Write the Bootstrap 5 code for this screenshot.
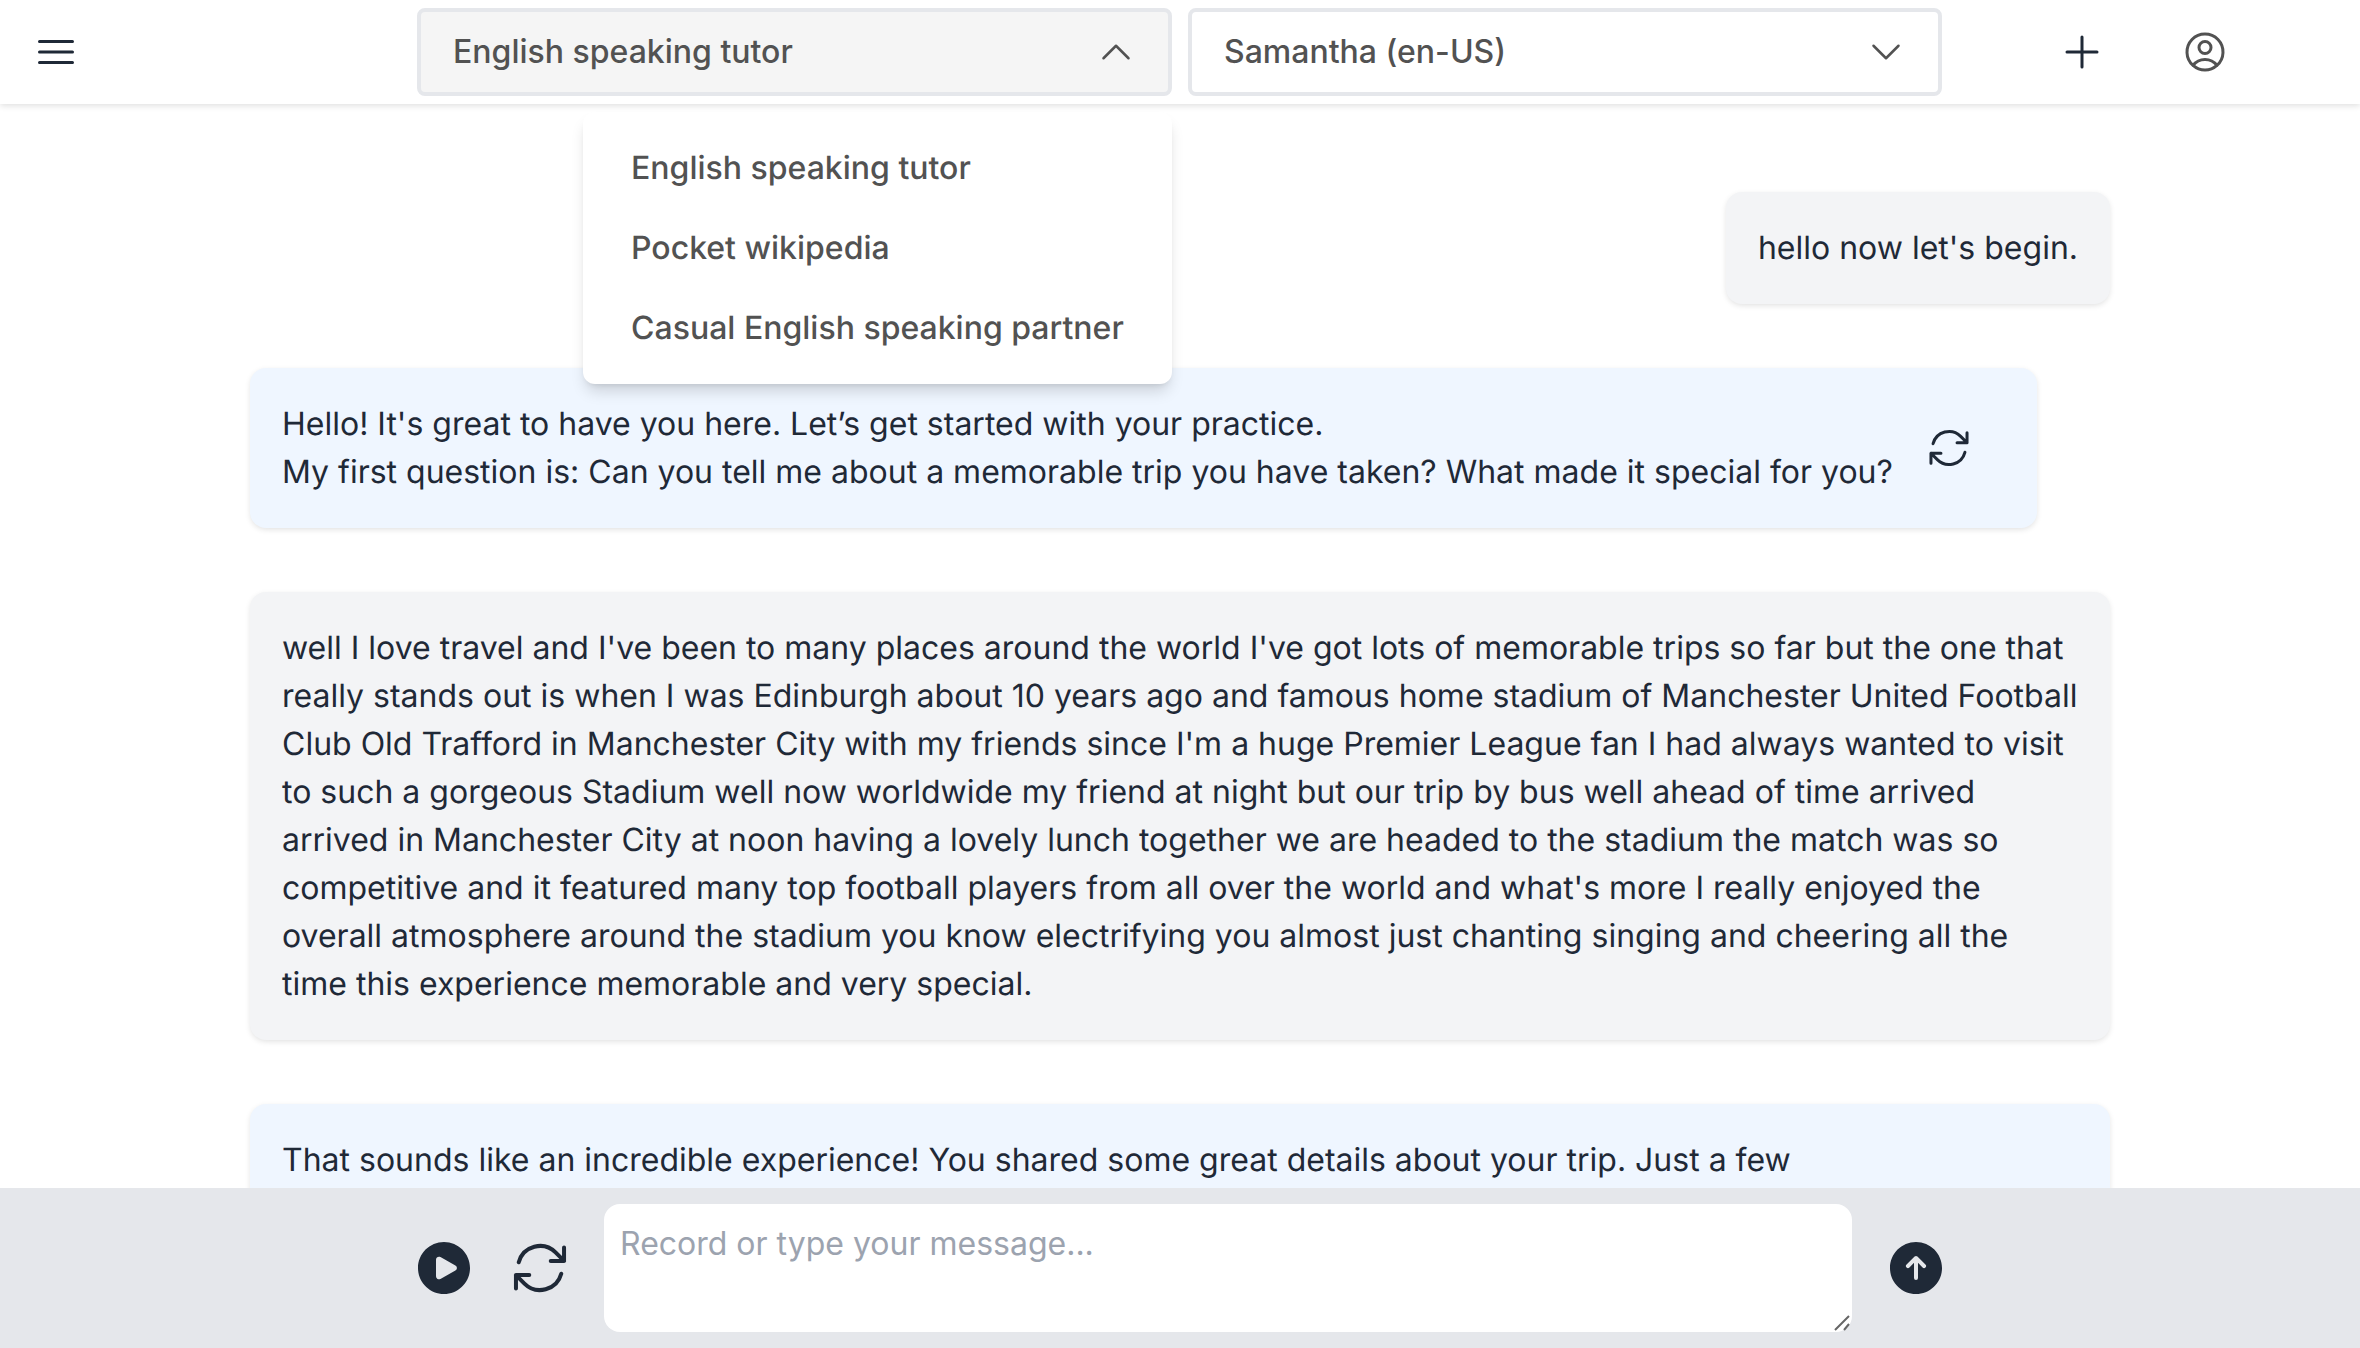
<!DOCTYPE html>
<html lang="en">
<head>
<meta charset="utf-8">
<title>English speaking tutor</title>
<link href="https://cdn.jsdelivr.net/npm/bootstrap@5.3.0/dist/css/bootstrap.min.css" rel="stylesheet">
<style>
html,body{height:100%}
body{font-family:Inter,"Liberation Sans",sans-serif;font-size:32px;line-height:48px;color:#1f2937;background:#fff;overflow:hidden;height:1348px;text-rendering:geometricPrecision}
.app-top{height:104px;flex:none;background:#fff;box-shadow:0 2px 6px rgba(0,0,0,.12);position:relative;z-index:5}
.top-left{width:417px;padding-left:32px;flex:none}
.top-right{width:418px;padding-left:116px;gap:75px;flex:none}
.top-mid{gap:16px;flex:none}
.ico{flex:none;display:block;fill:none;stroke:currentColor;stroke-width:1.5;stroke-linecap:round;stroke-linejoin:round}
.ico48{width:48px;height:48px}
.ico64{width:64px;height:64px}
.ico40{width:40px;height:40px}
.ico-solid{fill:currentColor;stroke:none}
.ink{color:#1f2937}
.ink-gray{color:#525252}
.pick{width:754px;height:88px}
.pick-wide{width:755px}
.pick-btn{width:100%;height:100%;border:4px solid #e5e7eb;border-radius:8px;background:#fff;color:#525252;font-weight:500;font-size:32px;line-height:48px;padding:0 32px 0 32px}
.pick-btn.open-state{background:#f5f5f5}
.pick-menu{display:block;position:absolute;top:104px;right:0;left:auto;width:589px;min-width:0;margin:0;padding:16px 0;border:0;border-radius:12px;background:#fff;box-shadow:0 10px 15px -3px rgba(0,0,0,.15),0 4px 6px -4px rgba(0,0,0,.12);font-size:32px}
.pick-menu .dropdown-item{padding:16px 0 16px 48px;color:#525252;font-weight:500;line-height:48px;background:transparent}
.app-main{overflow:hidden;min-height:0;padding-top:88px}
.chat{width:1860px;gap:64px;margin:0 auto}
.bub{padding:32px;border-radius:16px;box-shadow:0 2px 6px -1px rgba(0,0,0,.14)}
.bub-user{background:#f3f4f6}
.bub-bot{background:#eff6ff}
.bub-action{padding-right:64px;gap:32px}
.app-foot{height:160px;flex:none;background:#e5e7eb;gap:32px}
.say-wrap{width:1248px;height:128px;flex:none}
.say{display:block;width:100%;height:100%;border:0;border-radius:16px;padding:16px;font-size:32px;line-height:48px;color:#1f2937;font-family:inherit;background:#fff;resize:none}
.say::placeholder{color:#9ca3af;opacity:1}
.say-grip{position:absolute;right:0;bottom:0;width:20px;height:20px;stroke:#666;stroke-width:2;fill:none;pointer-events:none}
.plain-btn{border:0;background:none;padding:0;line-height:0}
</style>
</head>
<body class="d-flex flex-column">
<header class="app-top d-flex align-items-center">
  <div class="top-left d-flex align-items-center">
    <button class="plain-btn ink" aria-label="Menu"><svg class="ico ico48" viewBox="0 0 24 24"><path d="M3.75 6.75h16.5M3.75 12h16.5m-16.5 5.25h16.5"/></svg></button>
  </div>
  <div class="top-mid d-flex">
    <div class="pick pick-wide position-relative dropdown">
      <button class="pick-btn open-state d-flex align-items-center justify-content-between" type="button">
        <span>English speaking tutor</span>
        <svg class="ico ico40" viewBox="0 0 24 24"><path d="m4.5 15.75 7.5-7.5 7.5 7.5"/></svg>
      </button>
      <ul class="dropdown-menu pick-menu list-unstyled">
        <li><a class="dropdown-item" href="#">English speaking tutor</a></li>
        <li><a class="dropdown-item" href="#">Pocket wikipedia</a></li>
        <li><a class="dropdown-item" href="#">Casual English speaking partner</a></li>
      </ul>
    </div>
    <div class="pick">
      <button class="pick-btn d-flex align-items-center justify-content-between" type="button">
        <span>Samantha (en-US)</span>
        <svg class="ico ico40" viewBox="0 0 24 24"><path d="m19.5 8.25-7.5 7.5-7.5-7.5"/></svg>
      </button>
    </div>
  </div>
  <div class="top-right d-flex align-items-center">
    <button class="plain-btn ink" aria-label="New"><svg class="ico ico48" viewBox="0 0 24 24"><path d="M12 4.5v15m7.5-7.5h-15"/></svg></button>
    <button class="plain-btn ink-gray" aria-label="Account"><svg class="ico ico48" viewBox="0 0 24 24"><path d="M17.982 18.725A7.488 7.488 0 0 0 12 15.75a7.488 7.488 0 0 0-5.982 2.975m11.963 0a9 9 0 1 0-11.963 0m11.963 0A8.966 8.966 0 0 1 12 21a8.966 8.966 0 0 1-5.982-2.275M15 9.75a3 3 0 1 1-6 0 3 3 0 0 1 6 0Z"/></svg></button>
  </div>
</header>

<main class="app-main flex-grow-1">
  <div class="chat d-flex flex-column">
    <div class="bub bub-user align-self-end">hello now let's begin.</div>
    <div class="bub bub-bot bub-action align-self-start d-flex align-items-center">
      <div>Hello! It's great to have you here. Let’s get started with your practice.<br>My first question is: Can you tell me about a memorable trip you have taken? What made it special for you?</div>
      <button class="plain-btn ink" aria-label="Regenerate"><svg class="ico ico48" viewBox="0 0 24 24"><path d="M16.023 9.348h4.992v-.001M2.985 19.644v-4.992m0 0h4.992m-4.993 0 3.181 3.183a8.25 8.25 0 0 0 13.803-3.7M4.031 9.865a8.25 8.25 0 0 1 13.803-3.7l3.181 3.182m0-4.991v4.99"/></svg></button>
    </div>
    <div class="bub bub-user">well I love travel and I've been to many places around the world I've got lots of memorable trips so far but the one that really stands out is when I was Edinburgh about 10 years ago and famous home stadium of Manchester United Football Club Old Trafford in Manchester City with my friends since I'm a huge Premier League fan I had always wanted to visit to such a gorgeous Stadium well now worldwide my friend at night but our trip by bus well ahead of time arrived arrived in Manchester City at noon having a lovely lunch together we are headed to the stadium the match was so competitive and it featured many top football players from all over the world and what's more I really enjoyed the overall atmosphere around the stadium you know electrifying you almost just chanting singing and cheering all the time this experience memorable and very special.</div>
    <div class="bub bub-bot">That sounds like an incredible experience! You shared some great details about your trip. Just a few</div>
  </div>
</main>

<footer class="app-foot d-flex align-items-center justify-content-center">
  <button class="plain-btn ink" aria-label="Play"><svg class="ico ico-solid ico64" viewBox="0 0 24 24"><path fill-rule="evenodd" clip-rule="evenodd" d="M2.25 12c0-5.385 4.365-9.75 9.75-9.75s9.75 4.365 9.75 9.75-4.365 9.75-9.75 9.75S2.25 17.385 2.25 12Zm14.024-.983a1.125 1.125 0 0 1 0 1.966l-5.603 3.113A1.125 1.125 0 0 1 9 15.113V8.887c0-.857.921-1.4 1.671-.983l5.603 3.113Z"/></svg></button>
  <button class="plain-btn ink" aria-label="Retry"><svg class="ico ico64" viewBox="0 0 24 24"><path d="M16.023 9.348h4.992v-.001M2.985 19.644v-4.992m0 0h4.992m-4.993 0 3.181 3.183a8.25 8.25 0 0 0 13.803-3.7M4.031 9.865a8.25 8.25 0 0 1 13.803-3.7l3.181 3.182m0-4.991v4.99"/></svg></button>
  <div class="say-wrap position-relative">
    <textarea class="say" placeholder="Record or type your message..."></textarea>
    <svg class="say-grip" viewBox="0 0 20 20"><path d="M3 18 17 4M12 18l5-6"/></svg>
  </div>
  <button class="plain-btn ink" aria-label="Send"><svg class="ico ico-solid ico64" viewBox="0 0 24 24"><path fill-rule="evenodd" clip-rule="evenodd" d="M12 2.25c-5.385 0-9.75 4.365-9.75 9.75s4.365 9.75 9.75 9.75 9.75-4.365 9.75-9.75S17.385 2.25 12 2.25Zm-.53 5.47a.75.75 0 0 1 1.06 0l3 3a.75.75 0 1 1-1.06 1.06l-1.72-1.72v5.69a.75.75 0 0 1-1.5 0v-5.69l-1.72 1.72a.75.75 0 1 1-1.06-1.06l3-3Z"/></svg></button>
</footer>
<script src="https://cdn.jsdelivr.net/npm/bootstrap@5.3.0/dist/js/bootstrap.bundle.min.js"></script>
</body>
</html>
